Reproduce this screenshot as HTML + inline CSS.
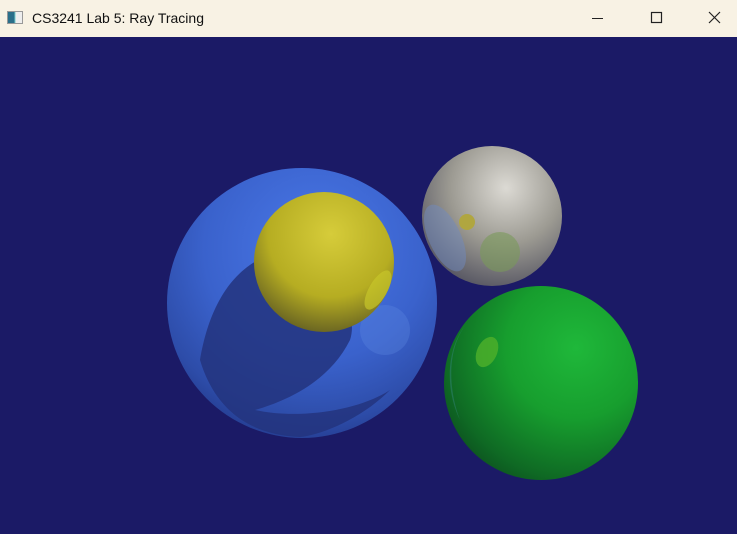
<!DOCTYPE html>
<html><head><style>
html,body{margin:0;padding:0;width:737px;height:534px;overflow:hidden;background:#1b1a66}
.tb{position:absolute;left:0;top:0;width:737px;height:37px;background:#f8f2e4;font-family:"Liberation Sans",sans-serif;font-size:14px;color:#111}
.tb .t{position:absolute;left:32px;top:10px}
.ic{position:absolute;left:7px;top:11px;width:16px;height:13px;border:1px solid #999;background:linear-gradient(90deg,#2a6f8a 0 45%,#7cc 45% 55%,#eee 55%);box-sizing:border-box}
svg{position:absolute;left:0;top:37px}
</style></head><body>
<div class="tb"><div class="ic"></div><div class="t">CS3241 Lab 5: Ray Tracing</div>
<svg style="top:0" width="737" height="37">
<line x1="592" y1="18.5" x2="603" y2="18.5" stroke="#222" stroke-width="1"/>
<rect x="651.5" y="12.5" width="10" height="10" fill="none" stroke="#222" stroke-width="1.2"/>
<path d="M709 12 L720 23 M720 12 L709 23" stroke="#222" stroke-width="1.2"/>
</svg></div>
<svg width="737" height="497" viewBox="0 37 737 497">
<defs>
<radialGradient id="b" cx="0.55" cy="0.3" r="0.75"><stop offset="0" stop-color="#4a78e8"/><stop offset="0.55" stop-color="#3a62cc"/><stop offset="0.85" stop-color="#2d4ca8"/><stop offset="1" stop-color="#22388a"/></radialGradient>
<radialGradient id="y" cx="0.55" cy="0.3" r="0.75"><stop offset="0" stop-color="#d6cc3a"/><stop offset="0.6" stop-color="#b6ad22"/><stop offset="1" stop-color="#5e5a22"/></radialGradient>
<radialGradient id="g" cx="0.68" cy="0.32" r="0.9"><stop offset="0" stop-color="#1fb83a"/><stop offset="0.4" stop-color="#179e2e"/><stop offset="0.75" stop-color="#0f6a24"/><stop offset="1" stop-color="#0a3a1a"/></radialGradient>
<radialGradient id="w" cx="0.6" cy="0.3" r="0.8"><stop offset="0" stop-color="#dcdad4"/><stop offset="0.5" stop-color="#9c9a92"/><stop offset="1" stop-color="#4a4a5a"/></radialGradient>
</defs>
<circle cx="302" cy="303" r="135" fill="url(#b)"/>
<path d="M200 360 C210 300 240 250 300 250 C330 270 360 310 350 340 C330 380 290 400 255 410 C300 420 360 410 390 390 C360 420 320 435 300 437 C250 435 215 410 200 360Z" fill="#23347e" opacity="0.85"/>
<circle cx="385" cy="330" r="25" fill="#5b88e0" opacity="0.35"/>
<circle cx="324" cy="262" r="70" fill="url(#y)"/>
<ellipse cx="378" cy="290" rx="9" ry="22" transform="rotate(30 378 290)" fill="#c8c62a" opacity="0.7"/>
<circle cx="492" cy="216" r="70" fill="url(#w)"/>
<ellipse cx="445" cy="238" rx="16" ry="36" transform="rotate(-25 445 238)" fill="#6f8abf" opacity="0.5"/>
<circle cx="500" cy="252" r="20" fill="#7a9a5a" opacity="0.6"/>
<circle cx="467" cy="222" r="8" fill="#b0a640"/>
<circle cx="541" cy="383" r="97" fill="url(#g)"/>
<ellipse cx="487" cy="352" rx="10" ry="16" transform="rotate(25 487 352)" fill="#4fb02a" opacity="0.8"/>
<path d="M470 320 C450 340 445 380 460 420 C445 390 445 345 470 320Z" fill="#3a8a8a" opacity="0.4"/>
</svg>
</body></html>
